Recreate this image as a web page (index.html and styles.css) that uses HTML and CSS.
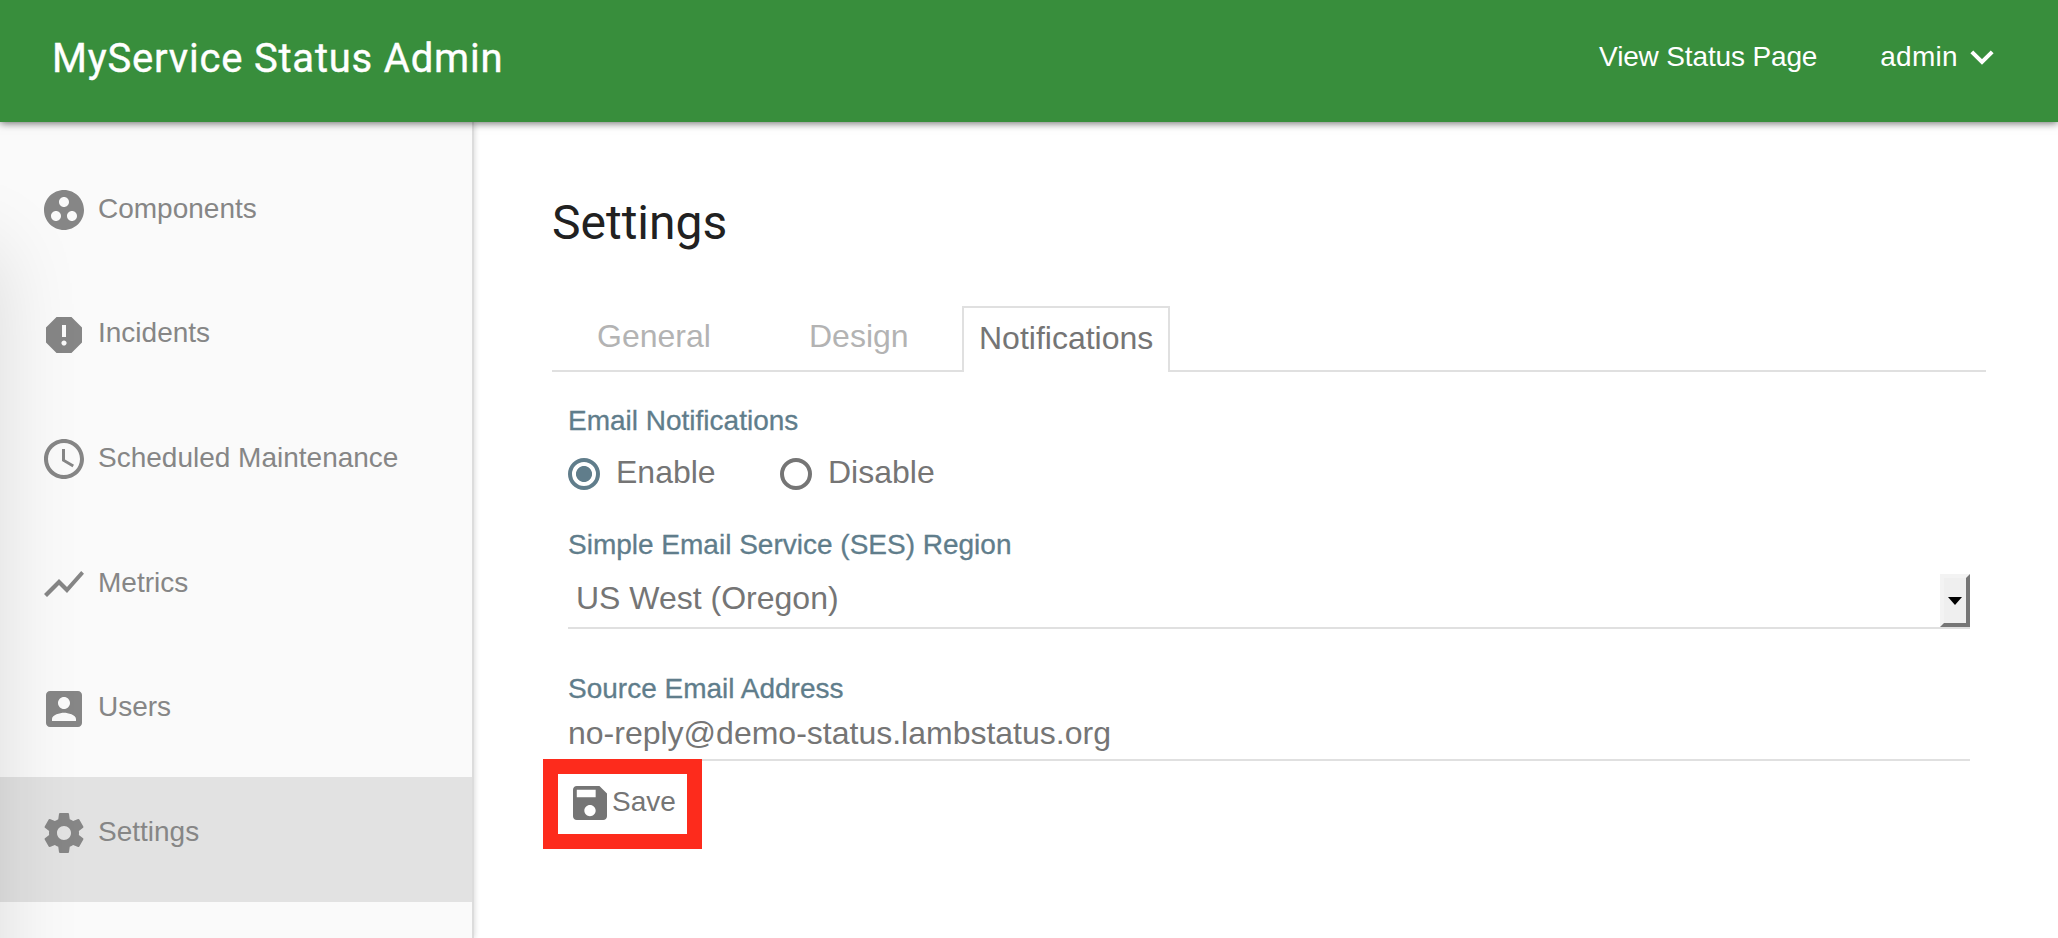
FILE: index.html
```html
<!DOCTYPE html>
<html lang="en">
<head>
<meta charset="utf-8">
<title>MyService Status Admin</title>
<link rel="stylesheet" href="styles.css">
</head>
<body>
<header class="header">
  <h1 class="brand">MyService Status Admin</h1>
  <nav class="header-nav">
    <a class="header-link view">View Status Page</a>
    <a class="header-link user"><span class="user-name">admin</span>
      <svg class="chevron" viewBox="0 0 24 15"><path d="M1.8 1.8 12 12 22.2 1.8" fill="none" stroke="currentColor" stroke-width="4"/></svg>
    </a>
  </nav>
</header>
<div class="body">
  <aside class="sidebar">
    <a class="item"><svg class="icon" viewBox="0 0 24 24"><path d="M12 2C6.48 2 2 6.48 2 12s4.48 10 10 10 10-4.48 10-10S17.52 2 12 2zM8 17.5c-1.38 0-2.5-1.12-2.5-2.5s1.12-2.5 2.5-2.5 2.5 1.12 2.5 2.5-1.12 2.5-2.5 2.5zM9.5 8c0-1.38 1.12-2.5 2.5-2.5s2.5 1.12 2.5 2.5-1.12 2.5-2.5 2.5S9.5 9.38 9.5 8zm6.5 9.500c-1.38 0-2.5-1.12-2.5-2.5s1.12-2.5 2.5-2.5 2.500 1.120 2.500 2.500-1.120 2.500-2.500 2.500z"/></svg><span class="label">Components</span></a>
    <a class="item"><svg class="icon" viewBox="0 0 24 24"><path d="M15.73 3H8.27L3 8.27v7.46L8.27 21h7.46L21 15.73V8.27L15.73 3zM12 17.3c-.72 0-1.3-.58-1.3-1.3 0-.72.58-1.3 1.3-1.3.72 0 1.3.58 1.3 1.3 0 .72-.58 1.3-1.3 1.3zm1-4.3h-2V7h2v6z"/></svg><span class="label">Incidents</span></a>
    <a class="item"><svg class="icon" viewBox="0 0 24 24"><path d="M11.990 2C6.470 2 2 6.480 2 12s4.470 10 9.990 10C17.520 22 22 17.520 22 12S17.520 2 11.990 2zM12 20c-4.420 0-8-3.580-8-8s3.580-8 8-8 8 3.580 8 8-3.580 8-8 8zm.5-13H11v6l5.250 3.150.750-1.230-4.500-2.670z"/></svg><span class="label">Scheduled Maintenance</span></a>
    <a class="item"><svg class="icon" viewBox="0 0 24 24"><path d="M3.500 18.490l6-6.010 4 4L22 6.920l-1.410-1.410-7.090 7.970-4-4L2 16.990z"/></svg><span class="label">Metrics</span></a>
    <a class="item"><svg class="icon" viewBox="0 0 24 24"><path d="M3 5v14c0 1.100.890 2 2 2h14c1.100 0 2-.9 2-2V5c0-1.100-.9-2-2-2H5c-1.110 0-2 .9-2 2zm12 4c0 1.660-1.340 3-3 3s-3-1.340-3-3 1.340-3 3-3 3 1.340 3 3zm-9 8c0-2 4-3.100 6-3.100s6 1.100 6 3.100v1H6v-1z"/></svg><span class="label">Users</span></a>
    <a class="item active"><svg class="icon" viewBox="0 0 24 24"><path d="M19.430 12.980c.040-.320.070-.640.070-.980s-.030-.660-.070-.980l2.110-1.650c.190-.150.240-.420.120-.640l-2-3.460c-.120-.220-.390-.300-.610-.220l-2.490 1c-.520-.400-1.080-.730-1.690-.980l-.380-2.650C14.460 2.180 14.250 2 14 2h-4c-.250 0-.460.180-.490.420l-.380 2.650c-.610.250-1.170.590-1.690.980l-2.490-1c-.230-.090-.490 0-.610.220l-2 3.460c-.130.220-.070.490.120.640l2.110 1.650c-.040.320-.070.650-.070.980s.030.660.070.980l-2.110 1.650c-.190.150-.240.420-.120.640l2 3.460c.120.220.390.300.610.220l2.490-1c.520.400 1.080.730 1.690.980l.380 2.650c.030.240.240.420.490.420h4c.250 0 .460-.180.490-.420l.380-2.650c.610-.250 1.170-.590 1.690-.980l2.490 1c.230.090.490 0 .610-.220l2-3.460c.120-.220.070-.490-.120-.640l-2.110-1.650zM12 15.500c-1.930 0-3.500-1.570-3.500-3.500s1.570-3.500 3.500-3.500 3.500 1.570 3.500 3.500-1.570 3.500-3.500 3.500z"/></svg><span class="label">Settings</span></a>
  </aside>
  <main class="main">
    <h2 class="title">Settings</h2>
    <div class="tabs">
      <div class="tab general">General</div>
      <div class="tab design">Design</div>
      <div class="tab selected">Notifications</div>
      <div class="tab-rest"></div>
    </div>
    <form class="form">
      <div class="field-label">Email Notifications</div>
      <div class="radios">
        <label class="radio on"><span class="ring"></span>Enable</label>
        <label class="radio"><span class="ring"></span>Disable</label>
      </div>
      <div class="field-label">Simple Email Service (SES) Region</div>
      <div class="select">
        <span>US West (Oregon)</span>
        <span class="select-button"><svg class="caret" viewBox="0 0 14 8"><path d="M0 0h14L7 8z"/></svg></span>
      </div>
      <div class="field-label source">Source Email Address</div>
      <div class="input">no-reply@demo-status.lambstatus.org</div>
      <div class="save">
        <svg class="save-icon" viewBox="3 3 18 18"><path d="M17 3H5c-1.110 0-2 .9-2 2v14c0 1.100.890 2 2 2h14c1.100 0 2-.9 2-2V7l-4-4zm-5 16c-1.660 0-3-1.340-3-3s1.340-3 3-3 3 1.340 3 3-1.340 3-3 3zm3-10H5V5h10v4z"/></svg><span>Save</span>
      </div>
    </form>
  </main>
</div>
</body>
</html>
```
FILE: styles.css
```css
* { box-sizing: border-box; }
body {
  margin: 0;
  height: 938px;
  overflow: hidden;
  display: flex;
  flex-direction: column;
  background: #fff;
  color: #757575;
  font-family: "Liberation Sans", Arial, sans-serif;
  font-size: 32px;
}
.header {
  position: relative;
  z-index: 2;
  flex: none;
  height: 122px;
  display: flex;
  justify-content: space-between;
  padding: 0 64px 0 52px;
  background: #388e3c;
  color: #fff;
  box-shadow: 0 1px 8px rgba(0, 0, 0, .6);
}
.brand {
  margin: 0;
  font: 400 40px/118px Roboto, sans-serif;
  letter-spacing: .8px;
  -webkit-text-stroke: .4px #fff;
}
.header-nav {
  display: flex;
  gap: 63px;
  font-size: 28px;
  line-height: 114px;
}
.view { letter-spacing: -.15px; }
.user { display: flex; align-items: center; height: 114px; }
.user-name { letter-spacing: .3px; }
.chevron { width: 24px; height: 15px; margin-left: 12px; }

.body { flex: 1; display: flex; min-height: 0; }
.sidebar {
  position: relative;
  flex: none;
  width: 474px;
  padding-top: 32px;
  overflow: hidden;
  background: #fafafa;
  border-right: 2px solid #dcdcdc;
  box-shadow: 1px 0 5px rgba(0, 0, 0, .14);
}
.sidebar::after {
  content: "";
  position: absolute;
  left: -400px;
  top: 126px;
  width: 400px;
  height: 1200px;
  box-shadow: 0 0 76px rgba(0, 0, 0, .125);
}
.item {
  display: flex;
  align-items: center;
  height: 124.6px;
  padding-left: 40px;
  color: #868686;
  font-size: 28px;
}
.item.active { background: #e2e2e2; }
.icon { width: 48px; height: 48px; margin: -12px 10px 0 0; fill: currentColor; }
.label { line-height: 32px; padding-bottom: 15px; }

.main { flex: 1; padding: 0 72px 0 78px; }
.title {
  margin: 68px 0 0;
  font: 400 48px/66px Roboto, sans-serif;
  color: #212121;
}
.tabs { display: flex; height: 66px; margin-top: 50px; }
.tab { border-bottom: 2px solid #e0e0e0; line-height: 61px; color: #b3b3b3; }
.general { width: 213px; padding-left: 45px; }
.design { width: 197px; padding-left: 44px; }
.selected {
  width: 208px;
  padding-left: 15px;
  border: 2px solid #e0e0e0;
  border-bottom: 0;
  line-height: 60px;
  color: #757575;
}
.tab-rest { flex: 1; border-bottom: 2px solid #e0e0e0; }

.form { width: 1402px; margin: 33px 0 0 16px; }
.field-label {
  height: 32px;
  line-height: 32px;
  font-size: 28px;
  color: #607d8b;
  -webkit-text-stroke: .3px #607d8b;
}
.radios { display: flex; height: 92px; padding-top: 21px; }
.radio { display: flex; width: 212px; height: 32px; line-height: 28px; }
.ring {
  width: 32px;
  height: 32px;
  margin-right: 16px;
  border: 4px solid #757575;
  border-radius: 50%;
}
.on .ring {
  border-color: #607d8b;
  background: radial-gradient(circle, #607d8b 7.6px, transparent 8.4px);
}
.select {
  display: flex;
  justify-content: space-between;
  height: 68px;
  padding: 13px 0 0 8px;
  border-bottom: 2px solid #e0e0e0;
  line-height: 49px;
}
.select-button {
  display: flex;
  align-items: center;
  justify-content: center;
  width: 30px;
  height: 53px;
  background: #efefef;
  border: 4px solid;
  border-color: #f3f3f3 #767676 #767676 #f3f3f3;
}
.caret { width: 14px; height: 8px; }
.source { margin-top: 44px; }
.input { height: 56px; border-bottom: 2px solid #e0e0e0; line-height: 56px; }
.save {
  position: relative;
  display: flex;
  width: 159px;
  height: 90px;
  margin: -2px 0 0 -25px;
  padding: 12px 0 0 15px;
  border: 15px solid #fd2b1c;
  background: #fff;
  font-size: 28px;
  line-height: 31px;
}
.save-icon { width: 34px; height: 34px; margin-right: 5px; fill: #757575; }
```
